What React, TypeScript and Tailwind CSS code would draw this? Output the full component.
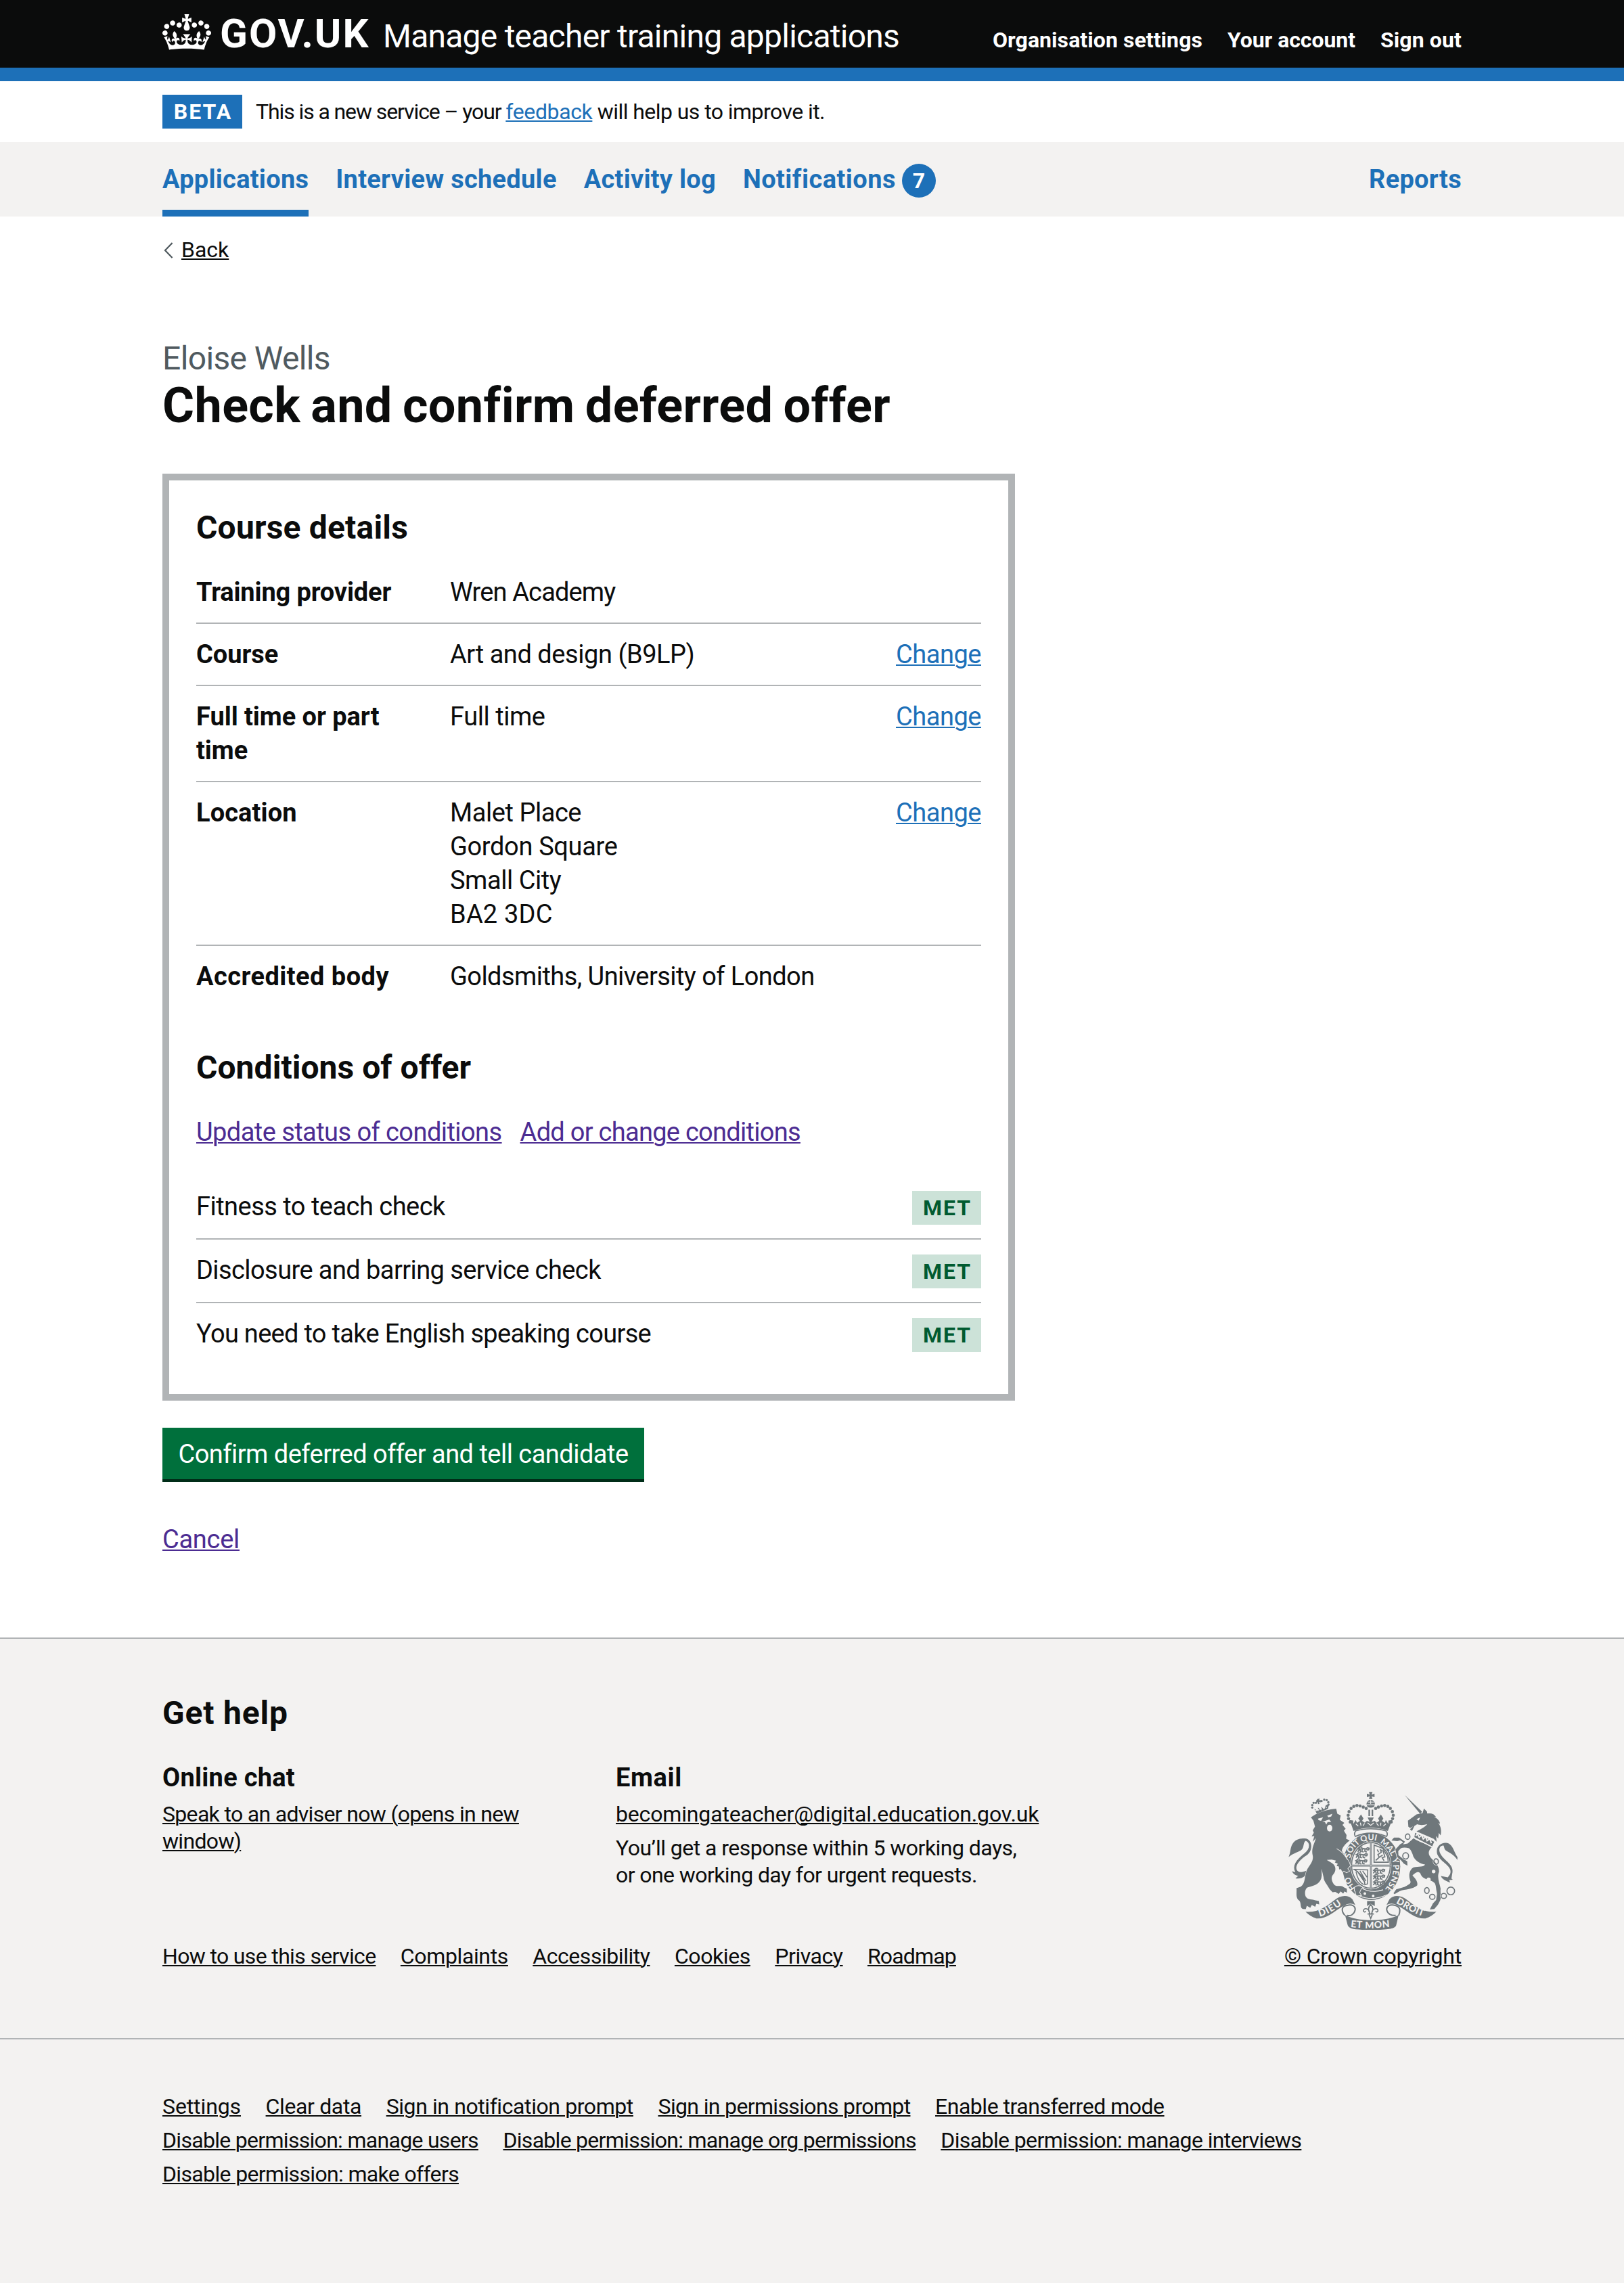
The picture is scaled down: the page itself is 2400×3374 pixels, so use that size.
import type { ReactNode } from "react";

function Crown() {
  return (
    <svg viewBox="0 0 132 97" className="block h-[53px] w-[72px] fill-current" aria-hidden="true">
      <path
        fillRule="evenodd"
        d="M25 30.2c3.5 1.5 7.7-.2 9.1-3.7 1.5-3.6-.2-7.8-3.9-9.2-3.6-1.4-7.6.3-9.1 3.9-1.4 3.5.3 7.5 3.9 9zM9 39.5c3.6 1.5 7.8-.2 9.2-3.7 1.5-3.6-.2-7.8-3.9-9.1-3.6-1.5-7.6.2-9.1 3.8-1.4 3.5.3 7.5 3.8 9zM4.4 57.2c3.5 1.5 7.7-.2 9.1-3.8 1.5-3.6-.2-7.7-3.9-9.1-3.5-1.5-7.6.3-9.1 3.8-1.4 3.5.3 7.6 3.9 9.1zm38.3-21.4c3.5 1.5 7.7-.2 9.1-3.8 1.5-3.6-.2-7.7-3.9-9.1-3.6-1.5-7.6.3-9.1 3.8-1.3 3.6.4 7.7 3.9 9.1zm64.4-5.6c-3.6 1.5-7.8-.2-9.1-3.7-1.5-3.6.2-7.8 3.8-9.2 3.6-1.4 7.7.3 9.2 3.9 1.3 3.5-.4 7.5-3.9 9zm15.9 9.3c-3.6 1.5-7.7-.2-9.1-3.7-1.5-3.6.2-7.8 3.7-9.1 3.6-1.5 7.7.2 9.2 3.8 1.5 3.5-.3 7.5-3.8 9zm4.7 17.7c-3.6 1.5-7.8-.2-9.2-3.8-1.5-3.6.2-7.7 3.9-9.1 3.6-1.5 7.7.3 9.2 3.8 1.3 3.5-.4 7.6-3.9 9.1zM89.3 35.8c-3.6 1.5-7.8-.2-9.2-3.8-1.4-3.6.2-7.7 3.9-9.1 3.6-1.5 7.7.3 9.2 3.8 1.4 3.6-.3 7.7-3.9 9.1zM69.7 17.7l8.9 4.7V9.3l-8.9 2.8c-.2-.3-.5-.6-.9-.9L72.4 0H59.6l3.5 11.2c-.3.3-.6.5-.9.9l-8.8-2.8v13.1l8.8-4.7c.3.3.6.7.9.9l-5 15.4v.1c-.2.8-.4 1.6-.4 2.4 0 4.1 3.1 7.5 7 8.1h.2c.3 0 .7.1 1 .1.4 0 .7 0 1-.1h.2c4-.6 7.1-4.1 7.1-8.1 0-.8-.1-1.7-.4-2.4V34l-5.1-15.4c.4-.2.7-.6 1-.9zM66 92.8c16.9 0 32.8 1.1 47.1 3.2 4-16.9 8.9-26.7 14-33.5l-9.6-3.4c1 4.9 1.1 7.2 0 10.2-1.5-1.4-3-4.3-4.2-8.7L108.6 76c2.8-2 5-3.2 7.5-3.3-4.4 9.4-10 11.9-13.6 11.2-4.3-.8-6.3-4.6-5.6-7.9 1-4.7 5.7-5.9 8-.5 4.3-8.7-3-11.4-7.6-8.8 7.1-7.2 7.9-13.5 2.1-21.1-8 6.1-8.1 12.3-4.5 20.8-4.7-5.4-12.1-2.5-9.5 6.2 3.4-5.2 7.9-2 7.2 3.1-.6 4.3-6.4 7.8-13.5 7.2-10.3-.9-10.9-8-11.2-13.8 2.5-.5 7.1 1.8 11 7.3L80.2 60c-4.1 4.4-8 5.3-12.3 5.4 1.4-4.4 8-11.6 8-11.6H55.5s6.4 7.2 7.9 11.6c-4.2-.1-8-1-12.3-5.4l1.4 16.4c3.9-5.5 8.5-7.7 10.9-7.3-.3 5.8-.9 12.8-11.1 13.8-7.2.6-12.9-2.9-13.5-7.2-.7-5 3.8-8.3 7.1-3.1 2.7-8.7-4.6-11.6-9.4-6.2 3.7-8.5 3.6-14.7-4.6-20.8-5.8 7.6-5 13.9 2.2 21.1-4.7-2.6-11.9.1-7.7 8.8 2.3-5.5 7.1-4.2 8.1.5.7 3.3-1.3 7.1-5.7 7.9-3.5.7-9-1.8-13.5-11.2 2.5.1 4.7 1.3 7.5 3.3l-4.7-15.4c-1.2 4.4-2.7 7.2-4.3 8.7-1.1-3-.9-5.3 0-10.2l-9.5 3.4c5 6.9 9.9 16.7 14 33.5 14.8-2.1 30.8-3.2 47.7-3.2z"
      />
    </svg>
  );
}

const ink = "#6f777b";
const paper = "#f3f2f1";

const crownPearls: [number, number][] = [
  [346, 218], [339, 203], [337, 188], [341, 172], [350, 158], [362, 149], [376, 145], [390, 147], [404, 152], [417, 158],
  [459, 158], [471, 152], [485, 147], [499, 145], [513, 149], [524, 158], [533, 172], [537, 188], [534, 203], [528, 218],
];

const chain: [number, number, number, number][] = [
  [601, 283, 10, 12], [592, 368, 13, 14], [727, 393, 10, 12], [686, 521, 10, 13], [710, 549, 12, 11], [761, 545, 12, 11], [792, 523, 17, 17],
];

// A passant lion reduced to a few strokes; three are stacked in each England quarter.
function SmallLion({ x, y }: { x: number; y: number }) {
  return (
    <path
      transform={`translate(${x} ${y})`}
      d="M3 20 9 12 2 8M9 12C16 6 28 7 38 9M12 12 14 22M22 9 20 20 26 22M34 9 33 20 40 22M38 9 45 4 52 6 50 13 42 13M9 12C5 2 14-2 20 2"
      fill="none"
      stroke={ink}
      strokeWidth="5.5"
      strokeLinejoin="round"
      strokeLinecap="round"
    />
  );
}

function Crest() {
  return (
    <svg viewBox="72 84 750 611" preserveAspectRatio="none" className="block h-[204px] w-[250px]" aria-hidden="true">
      <defs>
        <path id="soit" d="M347 379C350 352 366 330 391 311" />
        <path id="qui" d="M396 308C418 297 446 295 470 304" />
        <path id="mal" d="M477 311C502 324 522 350 531 376" />
        <path id="y" d="M531 382L541 410" />
        <path id="pense" d="M536 407C541 445 527 487 496 520" />
        <path id="ho" d="M370 511C353 490 345 468 342 440" />
        <path id="dieu" d="M211 637C250 627 282 603 322 575" />
        <path id="etmon" d="M348 683Q438 693 536 681" />
        <path id="droit" d="M548 577C585 594 625 625 684 640" />
      </defs>

      {/* Royal crown */}
      <g fill={ink}>
        {crownPearls.map(([x, y]) => (
          <circle key={`${x}-${y}`} cx={x} cy={y} r="7" />
        ))}
        <path d="M429 85H445L441 97 454 92V108L441 104 445 116H429L433 104 420 108V92L433 97Z" />
        <path d="M418 140A19 20 0 0 1 456 140Z" />
        <path d="M420 144H454C455 158 420 158 420 144ZM427 163H434V192H427ZM441 163H448V192H441Z" />
        <path d="M361 258C353 233 348 219 341 209L359 211 360 226 371 209 376 222 389 213 382 202 394 184 405 202 399 213 411 221 420 213 433 217 423 198 451 198 441 217 455 213 463 221 475 213 470 202 482 184 493 202 487 213 500 222 504 209 515 226 516 211 535 209C526 221 521 237 513 258C467 239 406 239 361 258Z" />
      </g>
      <path d="M371 226 382 236M391 221 394 234M410 224 403 235M423 222 437 233 451 222M463 224 472 235M482 221 481 234M504 226 493 236" stroke={paper} strokeWidth="4" fill="none" />
      <path d="M424 130H452M437 121V138" stroke={paper} strokeWidth="3" />

      {/* Garter */}
      <ellipse cx="440" cy="415" rx="128" ry="148" fill={ink} />
      <path d="M371 257C410 245 465 245 504 257C511 264 513 273 507 282C465 262 412 262 369 282C363 273 365 264 371 257Z" fill={paper} stroke={ink} strokeWidth="5" />
      <ellipse cx="438" cy="410" rx="91" ry="106" fill={paper} />
      <ellipse cx="438" cy="410" rx="86" ry="101" fill="none" stroke={ink} strokeWidth="5" />

      {/* Shield */}
      <path d="M438 309V512M350 411H527" stroke={ink} strokeWidth="8" />
      <path d="M438 309V512M350 411H527" stroke={paper} strokeWidth="2" />
      <SmallLion x={378} y={328} />
      <SmallLion x={370} y={354} />
      <SmallLion x={368} y={381} />
      <SmallLion x={447} y={423} />
      <SmallLion x={447} y={449} />
      <SmallLion x={447} y={475} />
      <path d="M452 320 490 334 512 370 515 396H452ZM459 388 475 374 469 362 484 352 480 341 492 347 500 372 488 376 496 389M475 374 490 364M466 340 472 352" fill="none" stroke={ink} strokeWidth="5" />
      <path d="M364 428 424 430 423 492 411 495C410 467 392 445 364 428ZM378 436 412 488M389 434 416 480M401 434 421 462M372 438C377 465 386 485 406 495" fill="none" stroke={ink} strokeWidth="4.5" />

      {/* Lion */}
      <g fill={ink} stroke={paper} strokeWidth="5" paintOrder="stroke">
        <path d="M172 197 192 184Q236 163 284 159L289 181 304 189 300 208 320 222 312 231 326 248 318 256 330 276 328 292 344 300C326 314 312 328 309 345L334 384Q346 402 345 412L334 425 342 435 330 441 318 434 311 439 305 426 297 428 296 415 286 413 291 402 278 397 283 389 264 384 242 386 262 398C284 410 285 432 272 449C258 463 264 484 277 497C290 506 305 496 318 507L331 513 332 531 321 525 315 535 304 525 295 536 280 527 268 529 255 515C242 492 229 480 228 462L219 425 220 455C218 490 190 500 158 507C144 513 144 537 149 548C160 565 178 557 192 565L207 568 209 583 196 580 191 593 176 585 169 598 154 589 149 604 136 603C121 597 132 577 119 565C103 552 110 532 108 511L127 504C150 490 142 452 157 425C171 403 184 388 180 367C172 335 188 314 194 289L180 306 187 280 175 282 185 265 180 255 190 238 183 212Z" />
        <path stroke="none" d="M73 373C84 349 78 335 91 314C101 296 124 288 145 291C181 294 181 345 156 363C127 381 103 405 108 427C114 444 135 441 151 434L145 457C131 470 112 469 103 467L116 456C104 455 94 449 88 436L103 440C88 411 105 386 146 354C169 337 169 306 148 301C136 311 143 332 129 342C107 354 89 359 73 373Z" />
        <path stroke="none" d="M187 160 205 170 203 154 218 167 218 151 231 162 238 144 252 139 248 160 198 181Z" />
        <path stroke="none" d="M201 116 211 114 208 122 217 121 215 131 208 128 210 138 203 139 202 129 196 132 195 124Z" />
      </g>
      <g fill={ink}>
        {[[178, 154], [178, 143], [184, 133], [194, 133], [219, 125], [231, 119], [242, 121], [249, 130], [250, 141]].map(([x, y]) => (
          <circle key={`${x}-${y}`} cx={x} cy={y} r="5" />
        ))}
      </g>
      <g fill={paper}>
        <path d="M203 203 226 197 217 213 206 210ZM244 190 267 181 262 193 250 197ZM222 217 253 207 262 218 246 218 240 229 234 218Z" />
        <ellipse cx="255" cy="245" rx="12" ry="15" />
      </g>
      <path d="M192 168 242 153" stroke={paper} strokeWidth="5" strokeDasharray="6 6" />
      <path d="M286 336Q314 350 334 384" stroke={paper} strokeWidth="3" fill="none" />

      {/* Unicorn */}
      <g fill={ink} stroke={paper} strokeWidth="5" paintOrder="stroke">
        <path stroke="none" d="M588 99 665 172 656 181ZM602 212 640 184 667 178 673 158 687 172 687 180C710 178 719 184 726 195L718 195C736 203 745 219 744 226L736 221C750 239 751 260 747 277L739 266 736 291 727 280 729 306 716 292 640 259C656 251 675 243 688 227C675 232 655 233 643 228L631 235 620 258 611 250 625 237 612 244 604 239Z" />
        <path d="M627 290C650 306 680 315 713 325C686 346 692 364 708 381C726 397 741 415 740 438C729 465 744 490 747 514C744 535 753 546 744 567L735 584 719 603 699 605 713 578 727 563 731 536C725 507 728 490 714 483C699 471 666 475 657 445C647 433 631 445 622 455C633 466 648 483 643 499C625 516 590 515 565 524L543 537 538 533 550 516 588 505C605 493 620 493 611 474C604 452 610 428 627 419C651 413 672 419 678 406C657 402 639 395 626 371Q619 345 607 334 585 328 571 334L559 347 560 365 583 383 599 392 600 411 584 402 570 386 555 376 546 340 567 317 582 308 568 299 555 303 529 300 540 287 563 287 589 305 580 317 601 313Z" />
        <path stroke="none" d="M748 457 779 463 789 449C803 412 748 399 732 360C724 323 750 309 772 310C800 313 804 346 822 374L821 386C807 362 785 354 770 344C761 334 764 326 759 321C744 323 737 335 744 354C760 391 811 403 798 449L795 468 801 473 785 475 789 486C769 479 754 471 748 457Z" />
      </g>
      <path d="M640 205 656 198 650 212Z" fill={paper} />
      <path d="M632 262 722 304 711 329 628 286Z" fill={ink} stroke={paper} strokeWidth="5" />
      <path d="M637 279 644 270 652 286 663 276 670 293 681 283 687 301 699 292 706 312" stroke={paper} strokeWidth="6" fill="none" />

      <g fill={paper} fontFamily="Lato" fontWeight="700" fontSize="37">
        <text><textPath href="#soit">SOIT</textPath></text>
        <text><textPath href="#qui">QUI</textPath></text>
        <text><textPath href="#mal">MAL</textPath></text>
        <text><textPath href="#y">Y</textPath></text>
        <text><textPath href="#pense" textLength="118">PENSE</textPath></text>
        <text><textPath href="#ho">HO</textPath></text>
      </g>

      {/* Buckle and strap */}
      <path d="M366 509C400 545 470 545 517 514L508 541C465 570 410 566 366 532Z" fill={ink} />
      <path d="M366 506C380 494 400 500 406 515L396 512 388 530 396 543 376 545C364 540 375 527 364 522Z" fill={ink} stroke={paper} strokeWidth="3" />
      <path d="M402 512C430 528 462 528 492 518M388 545C430 563 470 558 510 540" stroke={paper} strokeWidth="3.5" fill="none" />
      <circle cx="411" cy="535" r="6" fill={paper} />
      <circle cx="448" cy="545" r="6" fill={paper} />

      {/* Fleur-de-lis */}
      <path d="M421 568H455V590L437 580 421 590Z" fill={ink} />
      <path d="M437 583C418 603 432 617 434 625H440C442 617 456 603 437 583ZM431 623C434 601 405 594 405 611C407 619 414 617 414 612M443 623C440 601 470 594 469 611C467 619 460 617 460 612M423 625H451M430 628 437 645 444 628" fill="none" stroke={ink} strokeWidth="5" />

      {/* Motto ribbon */}
      <g fill={ink}>
        <path d="M148 615C205 620 240 592 277 563C302 541 338 538 356 560L369 586C345 571 327 583 304 597C270 617 240 648 196 645C177 640 162 628 148 615Z" />
        <path d="M728 615C671 620 636 592 599 563C574 541 538 538 520 560L507 586C531 571 549 583 572 597C606 617 636 648 680 645C699 640 714 628 728 615Z" />
        <path d="M323 629C370 658 500 662 561 629L550 675C545 688 530 695 438 696C360 695 342 691 335 675Z" />
      </g>
      <path d="M323 632C304 610 308 589 332 587C355 580 370 592 368 607C364 627 347 636 332 631M561 632C570 610 568 592 546 587C523 580 506 590 508 607C512 625 530 634 548 631" fill="none" stroke={ink} strokeWidth="6" />
      <g fill={paper} fontFamily="Lato" fontWeight="900" fontSize="42">
        <text><textPath href="#dieu" textLength="112">DIEU</textPath></text>
        <text><textPath href="#etmon" textLength="174">ET MON</textPath></text>
        <text><textPath href="#droit" textLength="134">DROIT</textPath></text>
      </g>

      {/* Chain */}
      {chain.map(([x, y, rx, ry]) => (
        <g key={`${x}-${y}`} fill="none">
          <ellipse cx={x} cy={y} rx={rx + 3} ry={ry + 3} stroke={paper} strokeWidth="3" />
          <ellipse cx={x} cy={y} rx={rx} ry={ry} stroke={ink} strokeWidth="5" />
        </g>
      ))}
      <circle cx="716" cy="437" r="8" fill={paper} />
      <circle cx="694" cy="473" r="9" fill={paper} />
    </svg>
  );
}

function Link({ className, children }: { className: string; children: ReactNode }) {
  return (
    <a href="#" className={`whitespace-nowrap underline decoration-2 underline-offset-2 ${className}`}>
      {children}
    </a>
  );
}

type Row = { label: ReactNode; labelClass: string; value: ReactNode; change?: boolean };

const rows: Row[] = [
  { label: "Training provider", labelClass: "tracking-[-0.15px]", value: <span className="tracking-[-0.85px]">Wren Academy</span> },
  { label: "Course", labelClass: "tracking-[-0.05px]", value: <span className="tracking-[-0.45px]">Art and design (B9LP)</span>, change: true },
  { label: <>Full time or part<br />time</>, labelClass: "tracking-[-0.05px]", value: <span className="tracking-[-0.45px]">Full time</span>, change: true },
  {
    label: "Location",
    labelClass: "tracking-[0.1px]",
    value: (
      <span className="tracking-[-0.45px]">
        Malet Place
        <br />
        <span className="tracking-[-0.35px]">Gordon Square</span>
        <br />
        Small City
        <br />
        <span className="tracking-[0.2px]">BA2 3DC</span>
      </span>
    ),
    change: true,
  },
  { label: "Accredited body", labelClass: "tracking-[0.45px]", value: <span className="tracking-[-0.56px]">Goldsmiths, University of London</span> },
];

const conditions = [
  { name: "Fitness to teach check", className: "tracking-[-0.52px]" },
  { name: "Disclosure and barring service check", className: "tracking-[-0.58px]" },
  { name: "You need to take English speaking course", className: "tracking-[-0.7px]" },
];

const serviceLinks = [
  { name: "How to use this service", className: "tracking-[-0.65px]" },
  { name: "Complaints", className: "tracking-[-0.37px]" },
  { name: "Accessibility", className: "tracking-[-0.45px]" },
  { name: "Cookies", className: "tracking-[-0.4px]" },
  { name: "Privacy", className: "tracking-[-0.45px]" },
  { name: "Roadmap", className: "tracking-[-0.84px]" },
];

const prototypeLinks = [
  [
    { name: "Settings", className: "tracking-[-0.11px]" },
    { name: "Clear data", className: "tracking-[-0.36px]" },
    { name: "Sign in notification prompt", className: "tracking-[-0.41px]" },
    { name: "Sign in permissions prompt", className: "tracking-[-0.65px]" },
    { name: "Enable transferred mode", className: "tracking-[-0.48px]" },
  ],
  [
    { name: "Disable permission: manage users", className: "tracking-[-0.7px]" },
    { name: "Disable permission: manage org permissions", className: "tracking-[-0.72px]" },
    { name: "Disable permission: manage interviews", className: "tracking-[-0.61px]" },
  ],
  [{ name: "Disable permission: make offers", className: "tracking-[-0.65px]" }],
];

export default function App() {
  return (
    <div className="min-h-[3374px] w-[2400px] bg-[#f3f2f1] font-['Roboto',sans-serif] text-[#0b0c0c]">
      <header className="border-b-[20px] border-[#1d70b8] bg-[#0b0c0c] text-white">
        <div className="mx-auto flex h-[100px] w-[1920px]">
          <div className="mt-[21px] mr-[13px]">
            <Crown />
          </div>
          <div className="flex flex-1 items-baseline whitespace-nowrap">
            <span className="w-[241px] text-[60px] leading-[100px] font-bold tracking-[2px]">GOV.UK</span>
            <span className="text-[48px] leading-none tracking-[-0.76px]">Manage teacher training applications</span>
            <nav className="ml-auto flex gap-[37px] text-[32px] leading-none font-bold">
              <a href="#" className="tracking-[0.07px]">Organisation settings</a>
              <a href="#" className="tracking-[-0.06px]">Your account</a>
              <a href="#" className="tracking-[0.11px]">Sign out</a>
            </nav>
          </div>
        </div>
      </header>

      <div className="bg-white">
        <div className="mx-auto flex h-[90px] w-[1920px] items-center text-[32px] leading-[50px]">
          <strong className="mr-5 w-[118px] bg-[#1d70b8] pl-[2px] text-center font-bold tracking-[2px] text-white">BETA</strong>
          <p className="whitespace-pre">
            <span className="tracking-[-1.1px]">This is a new service – your </span>
            <Link className="tracking-[-0.38px] text-[#1d70b8]">feedback</Link>
            <span className="tracking-[-0.56px]"> will help us to improve it.</span>
          </p>
        </div>
      </div>

      <nav className="bg-[#f3f2f1]">
        <div className="mx-auto flex h-[110px] w-[1920px] gap-10 text-[38px] leading-[110px] font-bold whitespace-nowrap text-[#1d70b8]">
          <a href="#" className="tracking-[0.26px] shadow-[inset_0_-10px_0_#1d70b8]">Applications</a>
          <a href="#" className="tracking-[0.27px]">Interview schedule</a>
          <a href="#" className="tracking-[0.25px]">Activity log</a>
          <a href="#" className="flex items-center">
            <span className="tracking-[0.45px]">Notifications</span>
            <span className="mt-[4px] ml-[9px] size-[50px] rounded-full bg-[#1d70b8] text-center text-[32px] leading-[50px] text-white">7</span>
          </a>
          <a href="#" className="ml-auto tracking-[0.3px]">Reports</a>
        </div>
      </nav>

      <main className="bg-white pb-[120px]">
        <div className="mx-auto w-[1920px] pt-[29px]">
          <a href="#" className="flex h-10 items-center text-[32px] leading-10">
            <svg viewBox="0 0 14 24" className="mt-[2px] mr-[12px] ml-[2px] h-6 w-[14px]" fill="none" stroke="#505a5f" strokeWidth="2.2" aria-hidden="true">
              <path d="M12.6 1 2 12 12.6 23" />
            </svg>
            <span className="underline decoration-2 underline-offset-2">Back</span>
          </a>

          <span className="mt-[111px] block text-[48px] leading-[60px] tracking-[-0.63px] text-[#505a5f]">Eloise Wells</span>
          <h1 className="mb-[60px] text-[72px] leading-[80px] font-bold tracking-[0.35px] [word-spacing:-3px]">Check and confirm deferred offer</h1>

          <section className="h-[1370px] w-[1260px] border-[10px] border-[#b1b4b6] px-10 pt-10 text-[38px] leading-[50px]">
            <h2 className="mb-5 text-[48px] leading-[60px] font-bold tracking-[0.19px]">Course details</h2>
            <dl>
              {rows.map((row, i) => (
                <div key={i} className="flex border-b-2 border-[#b1b4b6] py-5 last:border-b-0">
                  <dt className={`w-[375px] font-bold ${row.labelClass}`}>{row.label}</dt>
                  <dd className="flex-1">{row.value}</dd>
                  {row.change && (
                    <dd>
                      <Link className="tracking-[-0.47px] text-[#1d70b8]">Change</Link>
                    </dd>
                  )}
                </div>
              ))}
            </dl>

            <h2 className="mt-[60px] mb-10 text-[48px] leading-[60px] font-bold tracking-[0.05px]">Conditions of offer</h2>
            <div className="mb-10 flex gap-[27px] text-[#4c2c92]">
              <Link className="tracking-[-0.56px]">Update status of conditions</Link>
              <Link className="tracking-[-0.72px]">Add or change conditions</Link>
            </div>
            <ul>
              {conditions.map((c) => (
                <li key={c.name} className="flex h-[94px] justify-between border-b-2 border-[#b1b4b6] py-5 last:border-b-0">
                  <span className={c.className}>{c.name}</span>
                  <strong className="mt-[2px] h-[50px] w-[102px] bg-[#cce2d8] pl-[2px] text-center text-[32px] leading-[50px] font-bold tracking-[2px] text-[#005a30]">
                    MET
                  </strong>
                </li>
              ))}
            </ul>
          </section>

          <button className="mt-10 block h-[76px] w-[712px] bg-[#00703c] text-[38px] leading-[78px] tracking-[-0.52px] whitespace-nowrap text-white shadow-[0_4px_0_#002d18]">
            Confirm deferred offer and tell candidate
          </button>

          <p className="mt-[64px] text-[38px] leading-[50px]">
            <Link className="tracking-[-0.28px] text-[#4c2c92]">Cancel</Link>
          </p>
        </div>
      </main>

      <footer className="text-[32px] leading-10">
        <div className="border-y-2 border-[#b1b4b6]">
          <div className="mx-auto flex h-[590px] w-[1920px] justify-between">
            <div className="pt-20">
              <h2 className="mb-10 text-[48px] leading-[60px] font-bold tracking-[0.8px]">Get help</h2>
              <div className="flex">
                <div className="w-[670px]">
                  <h3 className="mb-[9px] text-[38px] leading-[50px] font-bold tracking-[0.25px]">Online chat</h3>
                  <Link className="tracking-[-0.68px]">
                    Speak to an adviser now (opens in new
                    <br />
                    window)
                  </Link>
                </div>
                <div>
                  <h3 className="mb-[9px] text-[38px] leading-[50px] font-bold tracking-[0.65px]">Email</h3>
                  <Link className="tracking-[-0.16px]">becomingateacher@digital.education.gov.uk</Link>
                  <p className="mt-[10px] tracking-[-0.53px] whitespace-nowrap">
                    You’ll get a response within 5 working days,
                    <br />
                    <span className="tracking-[-0.58px]">or one working day for urgent requests.</span>
                  </p>
                </div>
              </div>
              <div className="mt-20 flex gap-[36.4px]">
                {serviceLinks.map((l) => (
                  <Link key={l.name} className={l.className}>{l.name}</Link>
                ))}
              </div>
            </div>
            <div className="mt-[226px] flex flex-col items-end">
              <div className="mr-[6px] mb-[19px]">
                <Crest />
              </div>
              <Link className="tracking-[-0.17px]">© Crown copyright</Link>
            </div>
          </div>
        </div>

        <div className="mx-auto flex w-[1920px] flex-col gap-[10px] pt-[79px]">
          {prototypeLinks.map((line, i) => (
            <div key={i} className="flex gap-[36.6px]">
              {line.map((l) => (
                <Link key={l.name} className={l.className}>{l.name}</Link>
              ))}
            </div>
          ))}
        </div>
      </footer>
    </div>
  );
}
